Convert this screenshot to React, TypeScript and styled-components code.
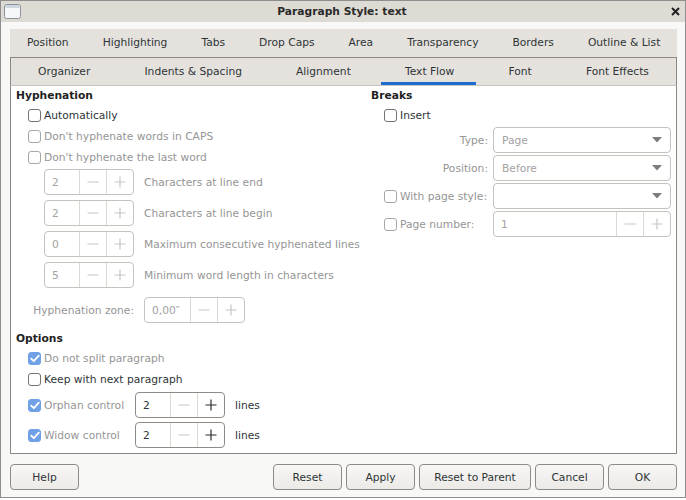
import React from 'react';
import styled, { createGlobalStyle } from 'styled-components';

const Global = createGlobalStyle`
  html, body { margin: 0; padding: 0; background: #ffffff; }
  body { font-family: "DejaVu Sans", "Noto Sans", sans-serif; font-size: 10.7px; color: #2e3436; }
  * { box-sizing: border-box; }
`;

const Window = styled.div`
  width: 686px;
  height: 498px;
  border: 1px solid #8e8e8e;
  background: #f8f8f7;
  display: flex;
  flex-direction: column;
`;

const TitleBar = styled.div`
  height: 21px;
  flex: none;
  background: #dddbd4;
  display: grid;
  grid-template-columns: 1fr auto 1fr;
  align-items: center;
  padding: 0 5px 0 3px;
`;

const Title = styled.div`
  font-weight: bold;
  color: #2a2a2a;
  font-size: 10.7px;
`;

const TitleRight = styled.div`
  display: flex;
  justify-content: flex-end;
`;

const Body = styled.div`
  flex: 1;
  display: flex;
  flex-direction: column;
  padding: 7px 8px 0 9px;
`;

const TabRow = styled.div<{ $boxed?: boolean }>`
  display: flex;
  height: 28px;
  background: #e5e2de;
  ${p => p.$boxed ? 'border: 1px solid #8c8782; border-bottom: none;' : ''}
`;

const Tab = styled.div<{ $active?: boolean }>`
  flex: 1 1 auto;
  padding: 0 17px 1px;
  display: flex;
  align-items: center;
  justify-content: center;
  white-space: nowrap;
  position: relative;
  color: #2e3436;
  &::after {
    content: '';
    position: absolute;
    left: 3px;
    right: 5px;
    bottom: 0;
    height: 3px;
    background: ${p => p.$active ? '#1c6dd0' : 'transparent'};
  }
`;

const Panel = styled.div`
  height: 369px;
  background: #ffffff;
  border: 1px solid #8c8782;
  border-top: 1px solid #c8c4c0;
  display: flex;
  padding: 1px 5px 0 5px;
`;

const LeftCol = styled.div`
  width: 355px;
  display: flex;
  flex-direction: column;
`;

const RightCol = styled.div`
  width: 300px;
  display: flex;
  flex-direction: column;
`;

const Heading = styled.div<{ $mt?: number }>`
  font-weight: bold;
  color: #1f1f1f;
  line-height: 18px;
  height: 18px;
  margin-top: ${p => p.$mt ?? 0}px;
`;

const CheckRow = styled.div<{ $indent?: number }>`
  display: flex;
  align-items: center;
  height: 21px;
  padding-left: ${p => p.$indent ?? 12}px;
`;

const Box = styled.span<{ $checked?: boolean; $dis?: boolean }>`
  width: 13px;
  height: 13px;
  flex: none;
  border-radius: 3px;
  border: 1px solid ${p => p.$checked ? '#70a1e6' : p.$dis ? '#aaa6a2' : '#77726d'};
  background: ${p => p.$checked ? '#70a1e6' : '#ffffff'};
  display: flex;
  align-items: center;
  justify-content: center;
  margin-right: 3px;
`;

const Label = styled.span<{ $dis?: boolean }>`
  color: ${p => p.$dis ? '#959595' : '#2e3436'};
  white-space: nowrap;
`;

const SpinList = styled.div`
  display: flex;
  flex-direction: column;
  gap: 5px;
  padding-left: 28px;
  margin-top: 1px;
`;

const SpinLine = styled.div`
  display: flex;
  align-items: center;
  gap: 10px;
`;

const Spin = styled.div<{ $w: number; $dis?: boolean }>`
  display: flex;
  flex: none;
  height: 26px;
  width: ${p => p.$w}px;
  border: 1px solid ${p => p.$dis ? '#c6c2be' : '#8f8a85'};
  border-radius: 4px;
  background: #ffffff;
  overflow: hidden;
`;

const SpinValue = styled.div<{ $dis?: boolean }>`
  flex: 1;
  display: flex;
  align-items: center;
  padding-left: 7px;
  color: ${p => p.$dis ? '#a2a2a2' : '#2e3436'};
`;

const SpinBtn = styled.div`
  width: 27px;
  flex: none;
  border-left: 1px solid #dcd8d4;
  display: flex;
  align-items: center;
  justify-content: center;
`;

const ZoneLine = styled.div`
  display: flex;
  align-items: center;
  margin-top: 9px;
  padding-left: 12px;
`;

const ZoneLabel = styled.div`
  width: 116px;
  padding-right: 10px;
  text-align: right;
  color: #959595;
  white-space: nowrap;
`;

const ControlGrid = styled.div`
  display: grid;
  grid-template-columns: 107px 90px auto;
  row-gap: 4px;
  align-items: center;
  padding-left: 12px;
  margin-top: 2px;
`;

const CheckCell = styled.div`
  display: flex;
  align-items: center;
`;

const Lines = styled.div`
  padding-left: 10px;
  color: #2e3436;
`;

const BreakGrid = styled.div`
  display: grid;
  grid-template-columns: 104px 178px;
  column-gap: 5px;
  row-gap: 2px;
  align-items: center;
  margin-left: 13px;
  margin-top: 1px;
`;

const FieldLabel = styled.div`
  text-align: right;
  color: #959595;
`;

const Combo = styled.div`
  height: 26px;
  border: 1px solid #c6c2be;
  border-radius: 4px;
  background: #ffffff;
  display: flex;
  align-items: center;
  justify-content: space-between;
  padding: 0 8px 0 8px;
  color: #a2a2a2;
`;

const Footer = styled.div`
  display: flex;
  align-items: center;
  margin-top: 10px;
`;

const Buttons = styled.div`
  display: flex;
  gap: 4px;
  margin-left: auto;
`;

const Button = styled.div<{ $w?: number }>`
  width: ${p => p.$w ?? 69}px;
  height: 26px;
  border: 1px solid #8f8a85;
  border-radius: 4px;
  background: linear-gradient(#f7f6f5, #eceae7);
  display: flex;
  align-items: center;
  justify-content: center;
  color: #2e3436;
  white-space: nowrap;
`;

const Minus = ({ c }: { c: string }) => (
  <svg width="12" height="12" viewBox="0 0 12 12"><path d="M0.5 6h11" stroke={c} strokeWidth="1.2" /></svg>
);
const Plus = ({ c }: { c: string }) => (
  <svg width="12" height="12" viewBox="0 0 12 12"><path d="M0.5 6h11M6 0.5v11" stroke={c} strokeWidth="1.2" /></svg>
);
const Tick = () => (
  <svg width="10" height="9" viewBox="0 0 10 9"><path d="M1.2 4.6 3.8 7.2 8.8 1.6" fill="none" stroke="#fff" strokeWidth="1.8" strokeLinecap="round" strokeLinejoin="round" /></svg>
);
const Arrow = () => (
  <svg width="10" height="6" viewBox="0 0 10 6"><path d="M0 0h10L5 5.5z" fill="#7d7d7d" /></svg>
);

const Check = ({ label, checked, dis, indent }: { label: string; checked?: boolean; dis?: boolean; indent?: number }) => (
  <CheckRow $indent={indent}>
    <Box $checked={checked} $dis={dis}>{checked && <Tick />}</Box>
    <Label $dis={dis}>{label}</Label>
  </CheckRow>
);

const SpinBox = ({ w, value, dis, plusOn }: { w: number; value: string; dis?: boolean; plusOn?: boolean }) => (
  <Spin $w={w} $dis={dis}>
    <SpinValue $dis={dis}>{value}</SpinValue>
    <SpinBtn><Minus c="#c9c5c1" /></SpinBtn>
    <SpinBtn><Plus c={plusOn ? '#2b2b2b' : '#c9c5c1'} /></SpinBtn>
  </Spin>
);

const tabs1 = ['Position', 'Highlighting', 'Tabs', 'Drop Caps', 'Area', 'Transparency', 'Borders', 'Outline & List'];
const tabs2 = ['Organizer', 'Indents & Spacing', 'Alignment', 'Text Flow', 'Font', 'Font Effects'];

const hyphSpins = [
  ['2', 'Characters at line end'],
  ['2', 'Characters at line begin'],
  ['0', 'Maximum consecutive hyphenated lines'],
  ['5', 'Minimum word length in characters'],
];

export default function App() {
  return (
    <>
      <Global />
      <Window>
        <TitleBar>
          <svg width="17" height="15" viewBox="0 0 17 15">
            <rect x="0.5" y="0.5" width="16" height="14" rx="2" fill="#f6f7f9" stroke="#8b9099" />
            <rect x="1" y="1" width="15" height="3" rx="1.5" fill="#cfd6e0" />
          </svg>
          <Title>Paragraph Style: text</Title>
          <TitleRight>
            <svg width="9" height="9" viewBox="0 0 9 9"><path d="M1 1l7 7M8 1 1 8" stroke="#222" strokeWidth="2" /></svg>
          </TitleRight>
        </TitleBar>
        <Body>
          <TabRow>
            {tabs1.map(t => <Tab key={t}>{t}</Tab>)}
          </TabRow>
          <TabRow $boxed>
            {tabs2.map(t => <Tab key={t} $active={t === 'Text Flow'}>{t}</Tab>)}
          </TabRow>
          <Panel>
            <LeftCol>
              <Heading>Hyphenation</Heading>
              <Check label="Automatically" />
              <Check label="Don't hyphenate words in CAPS" dis />
              <Check label="Don't hyphenate the last word" dis />
              <SpinList>
                {hyphSpins.map(([v, l]) => (
                  <SpinLine key={l}>
                    <SpinBox w={90} value={v} dis />
                    <Label $dis>{l}</Label>
                  </SpinLine>
                ))}
              </SpinList>
              <ZoneLine>
                <ZoneLabel>Hyphenation zone:</ZoneLabel>
                <SpinBox w={101} value={'0,00\u2033'} dis />
              </ZoneLine>
              <Heading $mt={7}>Options</Heading>
              <Check label="Do not split paragraph" checked dis />
              <Check label="Keep with next paragraph" />
              <ControlGrid>
                <CheckCell><Box $checked><Tick /></Box><Label $dis>Orphan control</Label></CheckCell>
                <SpinBox w={90} value="2" plusOn />
                <Lines>lines</Lines>
                <CheckCell><Box $checked><Tick /></Box><Label $dis>Widow control</Label></CheckCell>
                <SpinBox w={90} value="2" plusOn />
                <Lines>lines</Lines>
              </ControlGrid>
            </LeftCol>
            <RightCol>
              <Heading>Breaks</Heading>
              <Check label="Insert" indent={13} />
              <BreakGrid>
                <FieldLabel>Type:</FieldLabel>
                <Combo>Page<Arrow /></Combo>
                <FieldLabel>Position:</FieldLabel>
                <Combo>Before<Arrow /></Combo>
                <CheckCell><Box $dis /><Label $dis>With page style:</Label></CheckCell>
                <Combo><span /><Arrow /></Combo>
                <CheckCell><Box $dis /><Label $dis>Page number:</Label></CheckCell>
                <SpinBox w={178} value="1" dis />
              </BreakGrid>
            </RightCol>
          </Panel>
          <Footer>
            <Button>Help</Button>
            <Buttons>
              <Button>Reset</Button>
              <Button>Apply</Button>
              <Button $w={112}>Reset to Parent</Button>
              <Button>Cancel</Button>
              <Button>OK</Button>
            </Buttons>
          </Footer>
        </Body>
      </Window>
    </>
  );
}
